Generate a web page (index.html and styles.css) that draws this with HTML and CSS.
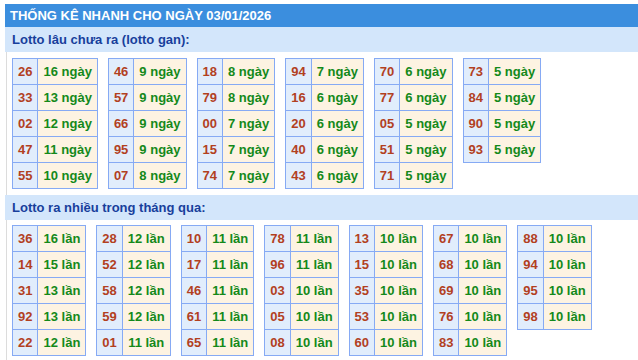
FILE: index.html
```html
<!DOCTYPE html>
<html lang="vi">
<head>
<meta charset="utf-8">
<link rel="stylesheet" href="styles.css">
</head>
<body>
<div class="wrap">
  <div class="head">THỐNG KÊ NHANH CHO NGÀY 03/01/2026</div>
  <div class="box">
    <div class="sub">Lotto lâu chưa ra (lotto gan):</div>
    <div class="grid">
      <table class="t"><tr><td class="n">26</td><td class="v">16 ngày</td></tr><tr><td class="n">33</td><td class="v">13 ngày</td></tr><tr><td class="n">02</td><td class="v">12 ngày</td></tr><tr><td class="n">47</td><td class="v">11 ngày</td></tr><tr><td class="n">55</td><td class="v">10 ngày</td></tr></table>
      <table class="t"><tr><td class="n">46</td><td class="v">9 ngày</td></tr><tr><td class="n">57</td><td class="v">9 ngày</td></tr><tr><td class="n">66</td><td class="v">9 ngày</td></tr><tr><td class="n">95</td><td class="v">9 ngày</td></tr><tr><td class="n">07</td><td class="v">8 ngày</td></tr></table>
      <table class="t"><tr><td class="n">18</td><td class="v">8 ngày</td></tr><tr><td class="n">79</td><td class="v">8 ngày</td></tr><tr><td class="n">00</td><td class="v">7 ngày</td></tr><tr><td class="n">15</td><td class="v">7 ngày</td></tr><tr><td class="n">74</td><td class="v">7 ngày</td></tr></table>
      <table class="t"><tr><td class="n">94</td><td class="v">7 ngày</td></tr><tr><td class="n">16</td><td class="v">6 ngày</td></tr><tr><td class="n">20</td><td class="v">6 ngày</td></tr><tr><td class="n">40</td><td class="v">6 ngày</td></tr><tr><td class="n">43</td><td class="v">6 ngày</td></tr></table>
      <table class="t"><tr><td class="n">70</td><td class="v">6 ngày</td></tr><tr><td class="n">77</td><td class="v">6 ngày</td></tr><tr><td class="n">05</td><td class="v">5 ngày</td></tr><tr><td class="n">51</td><td class="v">5 ngày</td></tr><tr><td class="n">71</td><td class="v">5 ngày</td></tr></table>
      <table class="t"><tr><td class="n">73</td><td class="v">5 ngày</td></tr><tr><td class="n">84</td><td class="v">5 ngày</td></tr><tr><td class="n">90</td><td class="v">5 ngày</td></tr><tr><td class="n">93</td><td class="v">5 ngày</td></tr></table>
    </div>
    <div class="sub">Lotto ra nhiều trong tháng qua:</div>
    <div class="grid grid2">
      <table class="t"><tr><td class="n">36</td><td class="v">16 lần</td></tr><tr><td class="n">14</td><td class="v">15 lần</td></tr><tr><td class="n">31</td><td class="v">13 lần</td></tr><tr><td class="n">92</td><td class="v">13 lần</td></tr><tr><td class="n">22</td><td class="v">12 lần</td></tr></table>
      <table class="t"><tr><td class="n">28</td><td class="v">12 lần</td></tr><tr><td class="n">52</td><td class="v">12 lần</td></tr><tr><td class="n">58</td><td class="v">12 lần</td></tr><tr><td class="n">59</td><td class="v">12 lần</td></tr><tr><td class="n">01</td><td class="v">11 lần</td></tr></table>
      <table class="t"><tr><td class="n">10</td><td class="v">11 lần</td></tr><tr><td class="n">17</td><td class="v">11 lần</td></tr><tr><td class="n">46</td><td class="v">11 lần</td></tr><tr><td class="n">61</td><td class="v">11 lần</td></tr><tr><td class="n">65</td><td class="v">11 lần</td></tr></table>
      <table class="t"><tr><td class="n">78</td><td class="v">11 lần</td></tr><tr><td class="n">96</td><td class="v">11 lần</td></tr><tr><td class="n">03</td><td class="v">10 lần</td></tr><tr><td class="n">05</td><td class="v">10 lần</td></tr><tr><td class="n">08</td><td class="v">10 lần</td></tr></table>
      <table class="t"><tr><td class="n">13</td><td class="v">10 lần</td></tr><tr><td class="n">15</td><td class="v">10 lần</td></tr><tr><td class="n">35</td><td class="v">10 lần</td></tr><tr><td class="n">53</td><td class="v">10 lần</td></tr><tr><td class="n">60</td><td class="v">10 lần</td></tr></table>
      <table class="t"><tr><td class="n">67</td><td class="v">10 lần</td></tr><tr><td class="n">68</td><td class="v">10 lần</td></tr><tr><td class="n">69</td><td class="v">10 lần</td></tr><tr><td class="n">76</td><td class="v">10 lần</td></tr><tr><td class="n">83</td><td class="v">10 lần</td></tr></table>
      <table class="t"><tr><td class="n">88</td><td class="v">10 lần</td></tr><tr><td class="n">94</td><td class="v">10 lần</td></tr><tr><td class="n">95</td><td class="v">10 lần</td></tr><tr><td class="n">98</td><td class="v">10 lần</td></tr></table>
    </div>
  </div>
</div>
</body>
</html>
```
FILE: styles.css
```css
html, body {
  margin: 0;
  padding: 0;
  background: #fff;
  overflow: hidden;
}
body {
  font-family: "Liberation Sans", Arial, sans-serif;
  font-size: 13px;
  font-weight: bold;
}
.wrap {
  padding: 4px 0 0 5px;
}
.head {
  background: #3b8ede;
  color: #fff;
  height: 23px;
  line-height: 23px;
  padding-left: 5px;
  font-size: 13px;
}
.box {
  margin-left: 1px;
  border-left: 1px solid #dcdcdc;
}
.sub {
  background: #d3e6fb;
  color: #183f9c;
  height: 25px;
  line-height: 25px;
  margin-left: -2px;
  padding-left: 7px;
}
.grid {
  display: flex;
  align-items: flex-start;
  gap: 10px;
  padding: 6px 0 6px 5px;
}
.grid2 {
  padding-top: 5px;
}
.t {
  border-collapse: collapse;
  border: 1px solid #86aaf4;
}
.t td {
  border: 1px solid #86aaf4;
  padding: 0 5px;
  height: 25px;
  line-height: 25px;
  text-align: center;
  white-space: nowrap;
}
.n {
  background: #e1edfc;
  color: #b2401f;
}
.v {
  background: #fdf3e2;
  color: #14891a;
}
```
